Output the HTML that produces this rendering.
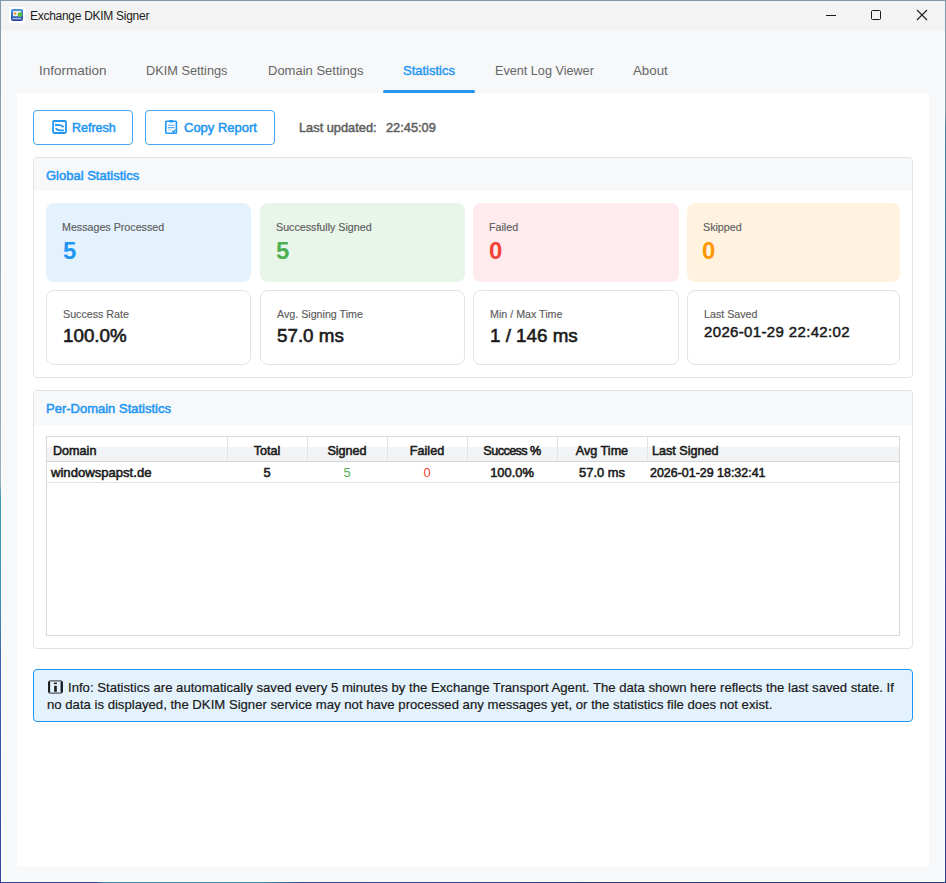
<!DOCTYPE html>
<html><head><meta charset="utf-8">
<style>
*{margin:0;padding:0;box-sizing:border-box}
html,body{width:946px;height:883px;overflow:hidden;background:#fff}
body{position:relative;font-family:"Liberation Sans",sans-serif;color:#1a1a1a}
.a{position:absolute}
.t{position:absolute;white-space:nowrap;line-height:1}
#frame{left:0;top:0;width:946px;height:883px;background:#fff}
#bt{left:0;top:0;width:946px;height:1px;background:#7d9bad}
#bl{left:0;top:0;width:1px;height:883px;background:linear-gradient(180deg,#7d9bad 0,#98adba 480px,#3d9ab5 500px,#3f93b8 600px,#3d62b2 660px,#2f41a0 883px)}
#br{left:945px;top:0;width:1px;height:883px;background:linear-gradient(180deg,#7d9bad 0,#7d9bad 110px,#3a88b5 130px,#3272b0 300px,#2b45a0 560px,#27398c 883px)}
#bb{left:0;top:882px;width:946px;height:1px;background:linear-gradient(90deg,#2f41a0 0,#2f41a0 95px,#3d8aa8 105px,#3a8ea8 265px,#2e4a9c 300px,#2b3f98 540px,#2d3d78 600px,#283a80 946px)}
#win{left:2px;top:1px;width:942px;height:880px;background:#f7f8fa}
#title{left:1px;top:1px;width:944px;height:30px;background:#f3f3f3}
#panel{left:17px;top:93px;width:912px;height:773px;background:#fff}
.tab{font-size:13px;color:#666;top:64px}
.btn{border:1px solid #4aa6f4;border-radius:4px;background:#fff}
.btnt{font-size:13px;font-weight:400;-webkit-text-stroke:0.5px #2196f3;color:#2196f3}
.grp{border:1px solid #e3e3e3;border-radius:4px;background:#fff;overflow:hidden}
.gh{background:#f7f8fa;position:absolute;left:0;top:0;right:0}
.ght{font-size:13px;font-weight:400;-webkit-text-stroke:0.5px #2196f3;color:#2196f3}
.card{border-radius:8px}
.cl{font-size:10.7px;color:#5c5c5c;-webkit-text-stroke:0.15px #5c5c5c}
.cv{font-size:24px;font-weight:700}
.wc{border:1px solid #e3e3e3;border-radius:8px;background:#fff}
.sep{top:437px;width:1px;height:24px;background:#e2e3e5}
.th{font-size:12.6px;font-weight:400;-webkit-text-stroke:0.55px #1a1a1a;color:#1a1a1a;top:445px}
.td{font-size:12.9px;font-weight:400;-webkit-text-stroke:0.55px #1a1a1a;color:#1a1a1a;top:467px}
.c{text-align:center}
.wv{font-size:18.8px;font-weight:400;-webkit-text-stroke:0.6px #1a1a1a;color:#1a1a1a}
</style></head><body>
<div id="frame" class="a"></div><div id="bt" class="a"></div><div id="bl" class="a"></div><div id="br" class="a"></div><div id="bb" class="a"></div>
<div id="win" class="a"></div>
<div id="title" class="a"></div>
<!-- app icon -->
<svg class="a" style="left:9px;top:7px" width="16" height="16" viewBox="0 0 16 16"><rect width="16" height="16" fill="#fff"/><rect x="2" y="2" width="12" height="12" rx="2" fill="url(#ig)"/><defs><linearGradient id="ig" x1="0" y1="0" x2="0" y2="1"><stop offset="0" stop-color="#4a98e6"/><stop offset="1" stop-color="#1a3c98"/></linearGradient></defs><rect x="4" y="4" width="8" height="5.2" fill="#eef2f6"/><circle cx="6" cy="6.6" r="1.3" fill="#e89a3a"/><circle cx="11" cy="7.6" r="2.4" fill="#5cc23c"/><rect x="3.5" y="10.8" width="9" height="1.6" fill="#9fb8e0"/></svg>
<div class="t" style="left:30px;top:10px;font-size:12px;letter-spacing:-0.28px;color:#1a1a1a">Exchange DKIM Signer</div>
<!-- window controls -->
<div class="a" style="left:826px;top:15px;width:10px;height:1px;background:#1a1a1a"></div>
<div class="a" style="left:871px;top:10px;width:10px;height:10px;border:1px solid #1a1a1a;border-radius:1.5px"></div>
<svg class="a" style="left:916px;top:9px" width="12" height="12" viewBox="0 0 12 12"><path d="M1 1L11 11M11 1L1 11" stroke="#1a1a1a" stroke-width="1.1"/></svg>

<!-- tabs -->
<div class="t tab" style="left:39px;font-size:13.5px;top:63.5px">Information</div>
<div class="t tab" style="left:146px;font-size:12.75px;top:64.6px">DKIM Settings</div>
<div class="t tab" style="left:268px">Domain Settings</div>
<div class="t tab" style="left:403px;color:#2196f3;-webkit-text-stroke:0.4px #2196f3">Statistics</div>
<div class="t tab" style="left:495px;font-size:12.65px;top:64.6px">Event Log Viewer</div>
<div class="t tab" style="left:633px;font-size:13.3px">About</div>
<div class="a" style="left:382.6px;top:90px;width:92px;height:3px;border-radius:1.5px;background:#2196f3"></div>

<div id="panel" class="a"></div>

<!-- buttons -->
<div class="a btn" style="left:33px;top:109.5px;width:99.5px;height:35px"></div>

<svg class="a" style="left:50px;top:118px" width="20" height="18" viewBox="50 118 20 18"><path d="M53.1 122.2Q53.1 121 54.3 121H64.8Q66 121 66 122.2V131.8Q66 133 64.8 133H54.3Q53.1 133 53.1 131.8Z" fill="none" stroke="#2196f3" stroke-width="1.8"/><path d="M55.6 125.1H59.6Q62.2 125.1 63.6 127.2M55.7 128.2Q57.3 130.4 59.8 130.4H63.9" fill="none" stroke="#2196f3" stroke-width="1.9"/><path d="M55.2 123.2L57.6 125.1L55.2 126.4Z" fill="#2196f3"/></svg>
<div class="t btnt" style="left:72px;top:122px;font-size:12.5px">Refresh</div>
<div class="a btn" style="left:145px;top:109.5px;width:129.5px;height:35px"></div>
<svg class="a" style="left:162px;top:118px" width="18" height="18" viewBox="162 118 18 18"><rect x="165.8" y="121.3" width="10.6" height="12" rx="0.8" fill="none" stroke="#2196f3" stroke-width="1.6"/><rect x="169" y="120" width="4.4" height="2.4" rx="1" fill="#2196f3"/><path d="M168 125.3H174.4M168 127.6H174.4" stroke="#5aa9f5" stroke-width="1.1"/><path d="M168 130H171" stroke="#9cc8f5" stroke-width="1"/><path d="M172.2 130.8L173.6 132.3L175.4 129.6" fill="none" stroke="#2196f3" stroke-width="1.3"/></svg>
<div class="t btnt" style="left:184px;top:121px">Copy Report</div>
<div class="t" style="left:299px;top:122px;font-size:12.8px;-webkit-text-stroke:0.5px #5f5f5f;color:#5f5f5f">Last updated:</div>
<div class="t" style="left:386px;top:122px;font-size:12.8px;-webkit-text-stroke:0.5px #5f5f5f;color:#5f5f5f">22:45:09</div>

<!-- global stats -->
<div class="a grp" style="left:33px;top:157px;width:880px;height:221px"><div class="gh" style="height:33px"></div></div>
<div class="t ght" style="left:46px;top:169px">Global Statistics</div>

<div class="a card" style="left:46px;top:203px;width:205px;height:78.5px;background:#e3f2fd"></div>
<div class="a card" style="left:259.5px;top:203px;width:205.5px;height:78.5px;background:#e8f5e9"></div>
<div class="a card" style="left:473px;top:203px;width:205.5px;height:78.5px;background:#ffebee"></div>
<div class="a card" style="left:686.5px;top:203px;width:213.5px;height:78.5px;background:#fff3e0"></div>
<div class="t cl" style="left:62px;top:222px">Messages Processed</div>
<div class="t cl" style="left:276px;top:222px">Successfully Signed</div>
<div class="t cl" style="left:489px;top:222px">Failed</div>
<div class="t cl" style="left:703px;top:222px">Skipped</div>
<div class="t cv" style="left:63px;top:239px;color:#2196f3">5</div>
<div class="t cv" style="left:276px;top:239px;color:#4caf50">5</div>
<div class="t cv" style="left:489px;top:239px;color:#f44336">0</div>
<div class="t cv" style="left:702px;top:239px;color:#ff9800">0</div>

<div class="a wc" style="left:46px;top:289.5px;width:205px;height:75px"></div>
<div class="a wc" style="left:259.5px;top:289.5px;width:205.5px;height:75px"></div>
<div class="a wc" style="left:473px;top:289.5px;width:205.5px;height:75px"></div>
<div class="a wc" style="left:686.5px;top:289.5px;width:213.5px;height:75px"></div>
<div class="t cl" style="left:63px;top:309px">Success Rate</div>
<div class="t cl" style="left:277px;top:309px">Avg. Signing Time</div>
<div class="t cl" style="left:490px;top:309px">Min / Max Time</div>
<div class="t cl" style="left:704px;top:309px">Last Saved</div>
<div class="t wv" style="left:63px;top:327px">100.0%</div>
<div class="t wv" style="left:277px;top:327px">57.0 ms</div>
<div class="t wv" style="left:490px;top:327px">1 / 146 ms</div>
<div class="t" style="left:704px;top:323.8px;font-size:15px;letter-spacing:0.35px;-webkit-text-stroke:0.5px #1a1a1a">2026-01-29 22:42:02</div>

<!-- per-domain -->
<div class="a grp" style="left:33px;top:390px;width:880px;height:259px"><div class="gh" style="height:34px"></div></div>
<div class="t ght" style="left:46px;top:402px">Per-Domain Statistics</div>


<div class="a" style="left:46px;top:436px;width:854px;height:200px;border:1px solid #d9d9d9;background:#fff"></div>
<div class="a" style="left:47px;top:437px;width:852px;height:24px;background:linear-gradient(180deg,#fff 0px,#fff 10px,#f2f3f5 10px,#f2f3f5 24px)"></div>
<div class="a" style="left:47px;top:461px;width:852px;height:1px;background:#d5d5d5"></div>
<div class="a" style="left:47px;top:482px;width:852px;height:1px;background:#e5e5e5"></div>
<div class="a sep" style="left:227px"></div>
<div class="a sep" style="left:307px"></div>
<div class="a sep" style="left:387px"></div>
<div class="a sep" style="left:467px"></div>
<div class="a sep" style="left:557px"></div>
<div class="a sep" style="left:647px"></div>
<div class="t th" style="left:53px">Domain</div>
<div class="t th c" style="left:227px;width:80px">Total</div>
<div class="t th c" style="left:307px;width:80px">Signed</div>
<div class="t th c" style="left:387px;width:80px">Failed</div>
<div class="t th c" style="left:467px;width:90px;letter-spacing:-0.55px">Success %</div>
<div class="t th c" style="left:557px;width:90px">Avg Time</div>
<div class="t th" style="left:652px">Last Signed</div>
<div class="t td" style="left:51px;font-size:13.1px;top:465.5px">windowspapst.de</div>
<div class="t td c" style="left:227px;width:80px">5</div>
<div class="t td c" style="left:307px;width:80px;-webkit-text-stroke:0;color:#4caf50">5</div>
<div class="t td c" style="left:387px;width:80px;-webkit-text-stroke:0;color:#f44336">0</div>
<div class="t td c" style="left:467px;width:90px">100.0%</div>
<div class="t td c" style="left:557px;width:90px">57.0 ms</div>
<div class="t td" style="left:650px;font-size:12.45px;top:466.5px">2026-01-29 18:32:41</div>

<!-- info box -->
<div class="a" style="left:33px;top:669px;width:880px;height:53px;border:1px solid #2196f3;border-radius:4px;background:#e3f2fd"></div>
<svg class="a" style="left:46px;top:678px" width="20" height="18" viewBox="46 678 20 18"><path d="M49 682.2Q49 680.9 50.3 680.9H60.7Q62 680.9 62 682.2V691.8Q62 693.1 60.7 693.1H50.3Q49 693.1 49 691.8Z" fill="none" stroke="#555" stroke-width="1.4"/><rect x="48.1" y="681.6" width="2" height="10.8" rx="0.6" fill="#1a1a1a"/><rect x="60.6" y="681.6" width="2.3" height="10.8" rx="0.6" fill="#1a1a1a"/><rect x="53.9" y="682.6" width="3" height="1.5" fill="#1a1a1a"/><rect x="54.2" y="685.8" width="2.6" height="6" fill="#1a1a1a"/></svg>
<div class="t" style="left:68px;top:681px;font-size:13.15px;color:#1a1a1a;-webkit-text-stroke:0.2px #1a1a1a">Info: Statistics are automatically saved every 5 minutes by the Exchange Transport Agent. The data shown here reflects the last saved state. If</div>
<div class="t" style="left:47px;top:697.5px;font-size:13.15px;color:#1a1a1a;-webkit-text-stroke:0.2px #1a1a1a">no data is displayed, the DKIM Signer service may not have processed any messages yet, or the statistics file does not exist.</div>
</body></html>
